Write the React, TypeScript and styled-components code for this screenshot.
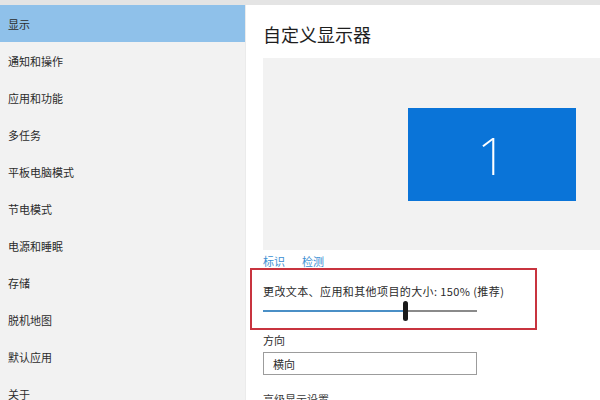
import React from "react";
import styled, { createGlobalStyle } from "styled-components";

const Global = createGlobalStyle`
  html, body { margin: 0; padding: 0; width: 600px; height: 400px; overflow: hidden; background: #ffffff; }
  body { font-family: "Noto Sans CJK SC", "Noto Sans", sans-serif; }
`;

const Window = styled.div`
  width: 600px;
  height: 400px;
  display: flex;
  flex-direction: column;
  overflow: hidden;
`;

const TopStrip = styled.div`
  height: 5px;
  flex: none;
  background: #e4e4e4;
`;

const Body = styled.div`
  flex: 1;
  display: flex;
  min-height: 0;
`;

const Sidebar = styled.nav`
  width: 245px;
  flex: none;
  background: #f2f2f2;
  border-right: 1px solid #ebebeb;
  display: flex;
  flex-direction: column;
`;

const NavItem = styled.div<{ $active?: boolean }>`
  height: 37px;
  flex: none;
  display: flex;
  align-items: center;
  padding-left: 8px;
  font-size: 11px;
  color: #2b2b2b;
  background: ${(p) => (p.$active ? "#8fc1ea" : "transparent")};
`;

const Content = styled.main`
  flex: 1;
  padding: 16px 0 0 17px;
  display: flex;
  flex-direction: column;
  background: #ffffff;
  & > * { flex: none; }
`;

const Title = styled.h1`
  margin: 0;
  font-size: 18px;
  font-weight: 400;
  color: #1e1e1e;
  line-height: 27px;
`;

const Preview = styled.div`
  margin-top: 10px;
  height: 192px;
  background: #f2f2f2;
  display: flex;
  align-items: center;
  padding-left: 145px;
`;

const Monitor = styled.div`
  width: 168px;
  height: 93px;
  background: #0a74d8;
  color: #ffffff;
  font-family: "Noto Sans", sans-serif;
  font-weight: 200;
  font-size: 52px;
  display: flex;
  align-items: center;
  justify-content: center;
`;

const Links = styled.div`
  display: flex;
  gap: 17px;
  margin-top: 3px;
  height: 16px;
  align-items: center;
`;

const Link = styled.span`
  font-size: 11px;
  color: #3b8fd3;
`;

const Highlight = styled.section`
  margin: -1px 0 0 -13px;
  width: 272px;
  height: 45px;
  border: 2px solid #c8343f;
  padding: 13px 0 0 11px;
  display: flex;
  flex-direction: column;
`;

const Label = styled.div<{ $wide?: boolean }>`
  font-size: 11px;
  letter-spacing: ${(p) => (p.$wide ? "0.4px" : "0")};
  color: #2b2b2b;
  line-height: 16px;
  white-space: nowrap;
`;

const Slider = styled.div`
  position: relative;
  margin-top: 11px;
  width: 214px;
  height: 2px;
  background: #8a8a8a;
`;

const SliderFill = styled.div`
  height: 100%;
  background: #4a8fc6;
`;

const Thumb = styled.div`
  position: absolute;
  top: -9px;
  width: 5px;
  height: 20px;
  border-radius: 3px;
  background: #1a1a1a;
  transform: translateX(-2px);
`;

const Field = styled.div`
  margin-top: 2px;
  display: flex;
  flex-direction: column;
`;

const Select = styled.div`
  margin-top: 4px;
  box-sizing: border-box;
  width: 214px;
  height: 23px;
  border: 1px solid #9c9c9c;
  display: flex;
  align-items: center;
  padding-left: 9px;
  font-size: 11px;
  color: #2b2b2b;
`;

const Faded = styled.div`
  margin-top: 16px;
  font-size: 11px;
  color: #3a3a3a;
`;

const navItems = [
  "显示",
  "通知和操作",
  "应用和功能",
  "多任务",
  "平板电脑模式",
  "节电模式",
  "电源和睡眠",
  "存储",
  "脱机地图",
  "默认应用",
  "关于",
];

const scale = 0.665;

export default function App() {
  return (
    <>
      <Global />
      <Window>
        <TopStrip />
        <Body>
          <Sidebar>
            {navItems.map((item, i) => (
              <NavItem key={item} $active={i === 0}>
                {item}
              </NavItem>
            ))}
          </Sidebar>
          <Content>
            <Title>自定义显示器</Title>
            <Preview>
              <Monitor>1</Monitor>
            </Preview>
            <Links>
              <Link>标识</Link>
              <Link>检测</Link>
            </Links>
            <Highlight>
              <Label $wide>更改文本、应用和其他项目的大小: 150% (推荐)</Label>
              <Slider>
                <SliderFill style={{ width: `${scale * 100}%` }} />
                <Thumb style={{ left: `${scale * 100}%` }} />
              </Slider>
            </Highlight>
            <Field>
              <Label>方向</Label>
              <Select>横向</Select>
            </Field>
            <Faded>高级显示设置</Faded>
          </Content>
        </Body>
      </Window>
    </>
  );
}
